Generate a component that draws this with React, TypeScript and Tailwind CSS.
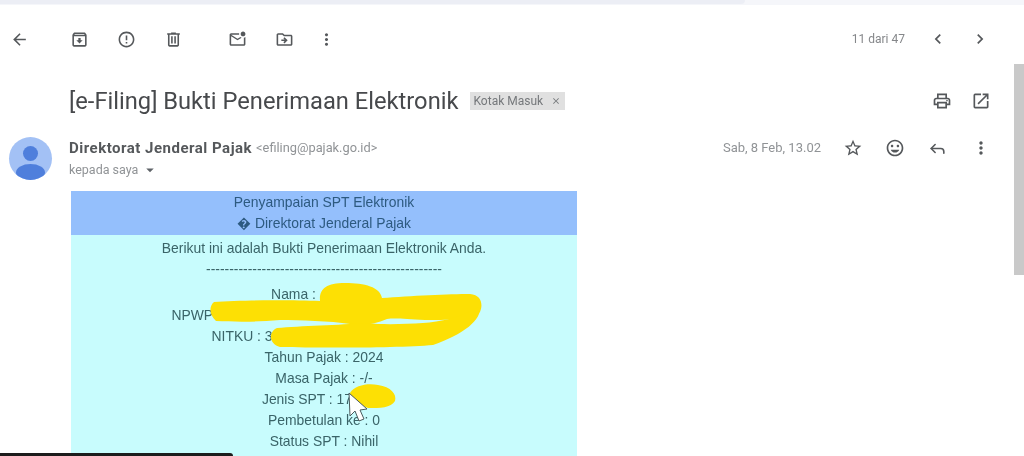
import { Reply } from 'lucide-react';
import {
  MdArrowBack,
  MdArrowDropDown,
  MdChevronLeft,
  MdChevronRight,
  MdClose,
  MdErrorOutline,
  MdMoreVert,
  MdOpenInNew,
  MdOutlineArchive,
  MdOutlineDriveFileMove,
  MdOutlineInsertEmoticon,
  MdOutlineMarkEmailUnread,
  MdOutlinePrint,
  MdStarBorder,
} from 'react-icons/md';

const rows = [
  { label: 'Tahun Pajak : 2024' },
  { label: 'Masa Pajak : -/-' },
  { label: 'Jenis SPT : 17', gap: 'w-[34px]' },
  { label: 'Pembetulan ke : 0' },
  { label: 'Status SPT : Nihil' },
  { label: 'Nominal : 0' },
];

function TrashIcon() {
  return (
    <svg className="h-[19px] w-[19px]" viewBox="0 0 24 24" fill="currentColor">
      <path d="M15 4V3H9v1H4v2h1v13c0 1.1.9 2 2 2h10c1.1 0 2-.9 2-2V6h1V4h-5zm2 15H7V6h10v13zM9 8h2v9H9zm4 0h2v9h-2z" />
    </svg>
  );
}

function Scribbles() {
  return (
    <svg className="absolute left-0 top-0 h-[456px] w-[1024px]" viewBox="0 0 1024 456" fill="none">
      {/* marker over the personal data */}
      <path
        d="M214 302 C240 300 290 300 320 301 C319 289 326 283 345 283 C365 283 380 287 382 298 C410 296 450 294 470 294 C482 295 483 305 480 312 C470 320 445 320 425 320 C405 319 395 318 387 319 C375 324 365 326 350 324 C330 321 300 320 280 320 C260 322 235 322 216 321 C209 315 209 306 214 302 Z"
        fill="#fde004"
      />
      <path
        d="M480 306 C482 320 464 334 433 345 C400 348 320 348 280 347 C269 344 268 332 277 328 C300 326 340 325 365 323 C385 325 405 324 423 323 C440 322 460 318 480 306 Z"
        fill="#fde004"
      />
      <path d="M350 393 C355 385 368 383 378 385 C391 387 397 394 395 401 C391 408 380 408 368 408 C360 405 351 399 350 393 Z" fill="#fde004" />
      {/* mouse cursor */}
      <path d="M349 393 L350 416 L355 411 L359 421 L364 419 L360 410 L367 409 Z" fill="#ffffff" stroke="#4a5a5c" strokeWidth="1" strokeLinejoin="round" />
    </svg>
  );
}

export default function App() {
  return (
    <div className="relative h-[456px] w-[1024px] overflow-hidden bg-white font-['Roboto',sans-serif] text-[#55585b] blur-[0.6px]">
      {/* strip of the browser above the mail */}
      <div className="h-[5px] bg-[#f5f6fa]">
        <div className="h-[4px] w-[745px] rounded-br-lg bg-[#eceef5]" />
      </div>

      {/* toolbar */}
      <div className="flex h-[68px] items-center pl-[10px] pr-[34px] text-[18px]">
        <MdArrowBack className="h-[19px] w-[19px]" />
        <div className="ml-[41px] flex items-center gap-[28px]">
          <MdOutlineArchive className="h-[19px] w-[19px]" />
          <MdErrorOutline className="h-[19px] w-[19px]" />
          <TrashIcon />
        </div>
        <div className="ml-[45px] flex items-center gap-[28px]">
          <MdOutlineMarkEmailUnread className="h-[19px] w-[19px]" />
          <MdOutlineDriveFileMove className="h-[19px] w-[19px]" />
          <MdMoreVert className="-ml-[5px] h-[19px] w-[19px]" />
        </div>
        <span className="ml-auto text-[12px] text-[#85878a]">11 dari 47</span>
        <MdChevronLeft className="ml-[23px] h-[20px] w-[20px]" />
        <MdChevronRight className="ml-[22px] h-[20px] w-[20px]" />
      </div>

      {/* subject */}
      <div className="flex h-[56px] items-center pl-[69px] pr-[33px]">
        <h1 className="text-[23.7px] font-normal leading-[28px] text-[#47494c]">[e-Filing] Bukti Penerimaan Elektronik</h1>
        <span className="ml-[12px] flex h-[18px] w-[95px] items-center justify-between bg-[#e0e0e0] pl-[3px] pr-[4px] text-[12px] text-[#75787b]">
          Kotak Masuk
          <MdClose className="h-[10px] w-[10px]" />
        </span>
        <MdOutlinePrint className="ml-auto h-[20px] w-[20px]" />
        <MdOpenInNew className="ml-[19px] h-[20px] w-[20px]" />
      </div>

      {/* sender */}
      <div className="flex h-[62px] pl-[9px] pr-[33px] pt-[8px]">
        <div className="relative h-[43px] w-[43px] overflow-hidden rounded-full bg-[#a3c1f5]">
          <div className="absolute left-[14px] top-[9px] h-[15px] w-[15px] rounded-full bg-[#4f7fdc]" />
          <div className="absolute left-[7px] top-[27px] h-[17px] w-[29px] rounded-[50%] bg-[#4f7fdc]" />
        </div>
        <div className="ml-[17px] flex flex-col">
          <div className="flex h-[22px] items-center gap-[4px]">
            <span className="text-[15px] font-bold tracking-[0.5px] text-[#55585b]">Direktorat Jenderal Pajak</span>
            <span className="text-[12.8px] text-[#909396]">&lt;efiling@pajak.go.id&gt;</span>
          </div>
          <div className="flex h-[22px] items-center text-[12.5px] text-[#909396]">
            kepada saya
            <MdArrowDropDown className="ml-[3px] h-[18px] w-[18px] text-[#5f6368]" />
          </div>
        </div>
        <div className="ml-auto flex h-[22px] items-center">
          <span className="text-[13px] text-[#909396]">Sab, 8 Feb, 13.02</span>
          <MdStarBorder className="ml-[22px] h-[20px] w-[20px]" />
          <MdOutlineInsertEmoticon className="ml-[22px] h-[20px] w-[20px]" />
          <Reply className="ml-[23px] h-[19px] w-[19px]" strokeWidth={2} />
          <MdMoreVert className="ml-[24px] h-[20px] w-[20px]" />
        </div>
      </div>

      {/* message body */}
      <div className="ml-[71px] w-[506px] font-['Liberation_Sans',sans-serif] text-[13.9px] leading-[21px]">
        <div className="flex h-[44px] flex-col items-center justify-center bg-[#94bffc] text-[#2d5a80]">
          <span>Penyampaian SPT Elektronik</span>
          <span>� Direktorat Jenderal Pajak</span>
        </div>
        <div className="flex flex-col items-center bg-[#c8fcfd] pt-[3px] text-[#3a6468]">
          <span>Berikut ini adalah Bukti Penerimaan Elektronik Anda.</span>
          <span className="h-[25px]">---------------------------------------------------</span>
          <span className="flex">
            Nama :<span className="w-[61px]" />
          </span>
          <span className="flex">
            NPWP :<span className="w-[256px]" />
          </span>
          <span className="flex">
            NITKU : 3<span className="w-[164px]" />
          </span>
          {rows.map(row => (
            <span key={row.label} className="flex">
              {row.label}
              {row.gap && <span className={row.gap} />}
            </span>
          ))}
        </div>
      </div>

      <Scribbles />

      {/* scrollbar and the video's progress bar */}
      <div className="absolute right-0 top-[64px] h-[211px] w-[10px] bg-[#c9c9c9]" />
      <div className="absolute bottom-0 left-0 h-[3px] w-[233px] rounded-tr-sm bg-[#1c1c1c]" />
    </div>
  );
}
